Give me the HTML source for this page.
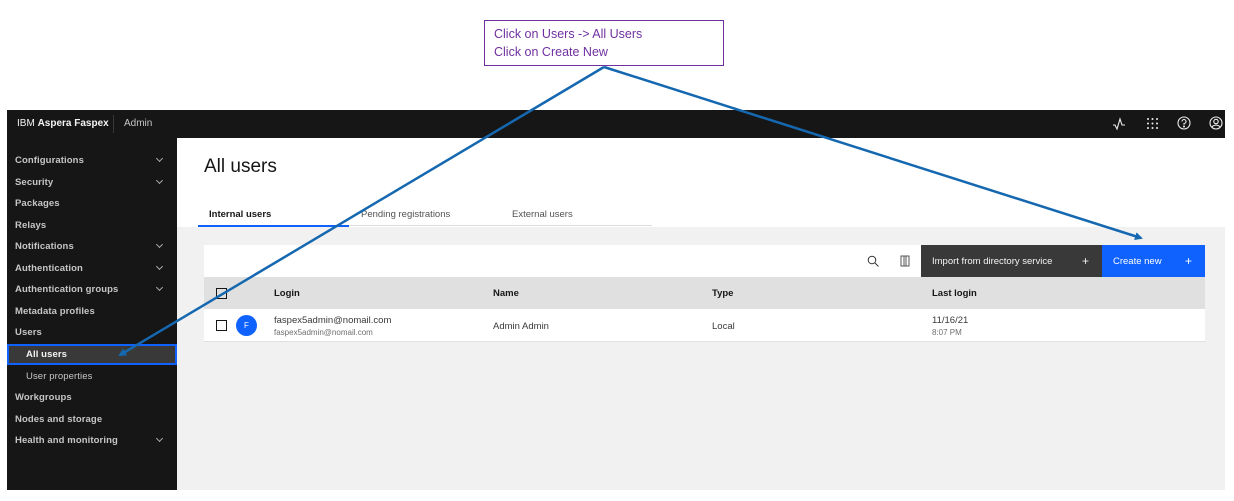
<!DOCTYPE html>
<html><head><meta charset="utf-8"><style>
*{margin:0;padding:0;box-sizing:border-box}
body{width:1234px;height:501px;background:#fff;position:relative;overflow:hidden;font-family:"Liberation Sans",sans-serif}
.a{position:absolute}
.hdr{left:7px;top:110px;width:1218px;height:28px;background:#161616;color:#f4f4f4;font-size:10px}
.side{left:7px;top:138px;width:170px;height:352px;background:#161616}
.side div{position:absolute;left:8px;font-size:9.5px;color:#c6c6c6;font-weight:bold;letter-spacing:.1px}
.chev{position:absolute;left:150px;width:5px;height:5px;border-right:1px solid #aaa;border-bottom:1px solid #aaa;transform:rotate(45deg)}
.main{left:177px;top:138px;width:1048px;height:352px;background:#fff}
.gray{left:177px;top:227px;width:1048px;height:263px;background:#f1f1f1}
.t{font-size:9.5px;color:#161616}
</style></head><body>
<div class="a hdr">
 <span class="a" style="left:10px;top:8px">IBM <b>Aspera Faspex</b></span>
 <span class="a" style="left:106px;top:5px;width:1px;height:18px;background:#393939"></span>
 <span class="a" style="left:117px;top:8px;color:#c6c6c6">Admin</span>
 <svg class="a" style="left:1105px;top:7px" width="14" height="14" viewBox="0 0 14 14" fill="none" stroke="#eee" stroke-width="1.1"><path d="M1 8h2l2 4 3-10 2 6h3"/></svg>
 <svg class="a" style="left:1139px;top:7px" width="13" height="13" viewBox="0 0 13 13" fill="#eee"><circle cx="2" cy="2" r="1"/><circle cx="6.5" cy="2" r="1"/><circle cx="11" cy="2" r="1"/><circle cx="2" cy="6.5" r="1"/><circle cx="6.5" cy="6.5" r="1"/><circle cx="11" cy="6.5" r="1"/><circle cx="2" cy="11" r="1"/><circle cx="6.5" cy="11" r="1"/><circle cx="11" cy="11" r="1"/></svg>
 <svg class="a" style="left:1170px;top:6px" width="14" height="14" viewBox="0 0 14 14" fill="none" stroke="#eee" stroke-width="1.1"><circle cx="7" cy="7" r="6"/><path d="M5 5.5a2 2 0 1 1 2 2v1.3"/><circle cx="7" cy="10.5" r=".5" fill="#eee"/></svg>
 <svg class="a" style="left:1202px;top:6px" width="14" height="14" viewBox="0 0 14 14" fill="none" stroke="#eee" stroke-width="1.1"><circle cx="7" cy="7" r="6"/><circle cx="7" cy="5.5" r="2.2"/><path d="M3 11c2-2.5 6-2.5 8 0"/></svg>
</div>
<div class="a side">
 <div style="top:17px">Configurations</div><span class="chev" style="top:18px"></span>
 <div style="top:39px">Security</div><span class="chev" style="top:40px"></span>
 <div style="top:60px">Packages</div>
 <div style="top:82px">Relays</div>
 <div style="top:103px">Notifications</div><span class="chev" style="top:104px"></span>
 <div style="top:125px">Authentication</div><span class="chev" style="top:126px"></span>
 <div style="top:146px">Authentication groups</div><span class="chev" style="top:147px"></span>
 <div style="top:168px">Metadata profiles</div>
 <div style="top:189px">Users</div>
 <span class="a" style="left:0;top:206px;width:170px;height:21px;background:#393939;border:2px solid #0f62fe"></span>
 <div style="top:211px;left:19px;color:#f4f4f4">All users</div>
 <div style="top:233px;left:19px;font-weight:normal">User properties</div>
 <div style="top:254px">Workgroups</div>
 <div style="top:276px">Nodes and storage</div>
 <div style="top:297px">Health and monitoring</div><span class="chev" style="top:298px"></span>
</div>
<div class="a main"></div>
<div class="a" style="left:204px;top:156px;font-size:19px;color:#161616">All users</div>
<div class="a t" style="left:209px;top:209px;font-weight:bold">Internal users</div>
<div class="a t" style="left:361px;top:209px;color:#525252">Pending registrations</div>
<div class="a t" style="left:512px;top:209px;color:#525252">External users</div>
<div class="a" style="left:198px;top:225px;width:454px;height:1px;background:#ddd"></div>
<div class="a" style="left:198px;top:225px;width:151px;height:2px;background:#0f62fe"></div>
<div class="a gray"></div>
<div class="a" style="left:204px;top:245px;width:1001px;height:32px;background:#fff"></div>
<svg class="a" style="left:867px;top:255px" width="12" height="12" viewBox="0 0 12 12" fill="none" stroke="#333" stroke-width="1"><circle cx="5" cy="5" r="3.8"/><path d="M8 8l3.5 3.5"/></svg>
<svg class="a" style="left:900px;top:255px" width="10" height="12" viewBox="0 0 10 12" fill="none" stroke="#555" stroke-width="1"><rect x="1" y="1" width="8" height="10"/><path d="M4 1v10M6 1v10"/></svg>
<div class="a" style="left:921px;top:245px;width:181px;height:32px;background:#393939;color:#f4f4f4;font-size:9.5px"><span class="a" style="left:11px;top:11px">Import from directory service</span><span class="a" style="left:161px;top:9px;font-size:12px">+</span></div>
<div class="a" style="left:1102px;top:245px;width:103px;height:32px;background:#0f62fe;color:#fff;font-size:9.5px"><span class="a" style="left:11px;top:11px">Create new</span><span class="a" style="left:83px;top:9px;font-size:12px">+</span></div>
<div class="a" style="left:204px;top:277px;width:1001px;height:32px;background:#e0e0e0"></div>
<div class="a" style="left:216px;top:288px;width:11px;height:11px;border:1px solid #161616"></div>
<div class="a t" style="left:274px;top:288px;font-weight:bold">Login</div>
<div class="a t" style="left:493px;top:288px;font-weight:bold">Name</div>
<div class="a t" style="left:712px;top:288px;font-weight:bold">Type</div>
<div class="a t" style="left:932px;top:288px;font-weight:bold">Last login</div>
<div class="a" style="left:204px;top:309px;width:1001px;height:33px;background:#fff;border-bottom:1px solid #e0e0e0"></div>
<div class="a" style="left:216px;top:320px;width:11px;height:11px;border:1px solid #161616"></div>
<div class="a" style="left:236px;top:315px;width:21px;height:21px;border-radius:50%;background:#0f62fe;color:#fff;font-size:8px;text-align:center;line-height:21px">F</div>
<div class="a t" style="left:274px;top:315px;color:#393939">faspex5admin@nomail.com</div>
<div class="a" style="left:274px;top:328px;font-size:8px;color:#6f6f6f">faspex5admin@nomail.com</div>
<div class="a t" style="left:493px;top:321px;color:#393939">Admin Admin</div>
<div class="a t" style="left:712px;top:321px;color:#393939">Local</div>
<div class="a t" style="left:932px;top:315px;color:#393939">11/16/21</div>
<div class="a" style="left:932px;top:328px;font-size:8px;color:#6f6f6f">8:07 PM</div>
<div class="a" style="left:484px;top:20px;width:240px;height:46px;border:1px solid #7030a0;background:#fff;color:#7030a0;font-size:12.5px;line-height:18px;padding:4px 0 0 9px">Click on Users -&gt; All Users<br>Click on Create New</div>
<svg class="a" style="left:0;top:0" width="1234" height="501">
<defs><marker id="m" markerWidth="8" markerHeight="8" refX="6" refY="4" orient="auto" markerUnits="userSpaceOnUse"><path d="M0,0L8,4L0,8z" fill="#1568b0"/></marker></defs>
<line x1="604" y1="67" x2="120" y2="355" stroke="#1568b0" stroke-width="2.5" marker-end="url(#m)"/>
<line x1="604" y1="67" x2="1141" y2="238" stroke="#1568b0" stroke-width="2.5" marker-end="url(#m)"/>
</svg>
</body></html>
